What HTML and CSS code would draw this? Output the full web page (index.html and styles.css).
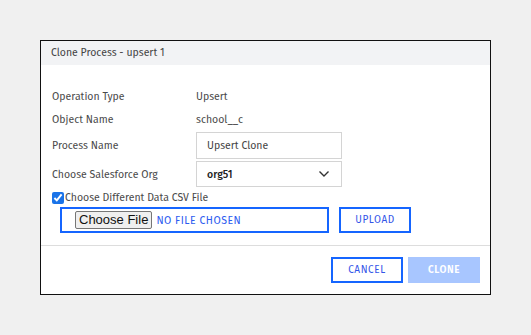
FILE: index.html
```html
<!DOCTYPE html>
<html lang="en">
<head>
  <meta charset="UTF-8">
  <title>Clone Process</title>
  <link rel="stylesheet" href="styles.css">
</head>
<body>
  <!-- clone dialog -->
  <div class="dialog">
    <div class="dialog-header">Clone Process - upsert 1</div>

    <div class="dialog-body">
      <div class="row text-row">
        <span class="label">Operation Type</span>
        <span class="value">Upsert</span>
      </div>
      <div class="row text-row">
        <span class="label">Object Name</span>
        <span class="value">school__c</span>
      </div>
      <div class="row input-row">
        <span class="label">Process Name</span>
        <div class="field">Upsert Clone</div>
      </div>
      <div class="row select-row">
        <span class="label">Choose Salesforce Org</span>
        <div class="field select">
          <span>org51</span>
          <svg width="12" height="8" viewBox="0 0 12 8"><path d="M1.5 1.5 L6 6 L10.5 1.5" fill="none" stroke="#333" stroke-width="1.4"/></svg>
        </div>
      </div>
      <label class="check-row">
        <input type="checkbox" checked>
        <span>Choose Different Data CSV File</span>
      </label>
      <div class="file-row">
        <div class="file-box">
          <span class="file-btn">Choose File</span>
          <span class="file-name">NO FILE CHOSEN</span>
        </div>
        <button class="btn">UPLOAD</button>
      </div>
    </div>

    <div class="dialog-footer">
      <button class="btn">CANCEL</button>
      <button class="btn primary" disabled>CLONE</button>
    </div>
  </div>
</body>
</html>
```

FILE: styles.css
```css
* {
  margin: 0;
  padding: 0;
  box-sizing: border-box;
}
body {
  font-family: "Fira Sans", "Noto Sans", Arial, sans-serif;
  font-size: 10.5px;
  color: #4a4a4a;
  background: #f0f0f0;
  padding: 40px;
}
/* dialog */
.dialog {
  width: 451px;
  background: #fff;
  border: 1px solid #111;
}
.dialog-header {
  height: 24px;
  line-height: 24px;
  padding-left: 10px;
  background: #f2f3f5;
  color: #444;
}
.dialog-body {
  padding: 20px 0 12px 11px;
}
.row {
  display: flex;
  align-items: center;
}
.label {
  width: 144px;
}
.text-row {
  height: 23px;
}
.input-row {
  margin-top: 1px;
}
.select-row {
  margin-top: 2px;
}
.field {
  width: 146px;
  height: 27px;
  border: 1px solid #d4d4d4;
  padding: 0 10px;
  line-height: 25px;
  color: #444;
}
.select {
  height: 26px;
  display: flex;
  align-items: center;
  justify-content: space-between;
  color: #222;
  font-weight: 500;
}
.select svg {
  margin-right: 1px;
}
/* checkbox + file */
.check-row {
  display: flex;
  align-items: center;
  height: 17px;
  margin-top: 2px;
}
.check-row input {
  width: 12px;
  height: 12px;
  margin: 0 1px 0 0;
  accent-color: #1a73e8;
}
.file-row {
  display: flex;
  gap: 10px;
  margin-top: 1px;
  margin-left: 8px;
}
.file-box {
  width: 269px;
  height: 26px;
  border: 2px solid #1565ff;
  display: flex;
  align-items: center;
  padding-left: 13px;
}
.file-btn {
  font-family: Arial, "Liberation Sans", sans-serif;
  font-size: 13px;
  color: #111;
  background: #efefef;
  border: 1px solid #767676;
  border-radius: 2px;
  height: 18px;
  line-height: 16px;
  padding: 0 3px;
}
.file-name {
  margin-left: 4px;
  color: #2d5cf0;
  letter-spacing: 0.5px;
}
/* buttons */
.btn {
  width: 72px;
  height: 26px;
  font-family: inherit;
  font-size: 10px;
  letter-spacing: 0.6px;
  color: #3355e8;
  background: #fff;
  border: 2px solid #1565ff;
}
.btn.primary {
  background: #a8c6ff;
  border-color: #a8c6ff;
  color: #fff;
  font-weight: 600;
}
.dialog-footer {
  display: flex;
  justify-content: flex-end;
  gap: 5px;
  border-top: 1px solid #ddd;
  padding: 11px 10px 11px 0;
}
```
